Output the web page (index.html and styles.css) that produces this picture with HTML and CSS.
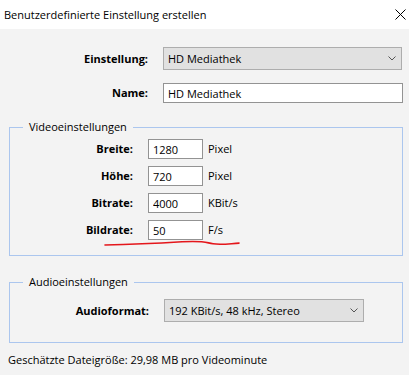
FILE: index.html
```html
<!DOCTYPE html>
<html lang="de">
<head>
  <meta charset="UTF-8">
  <title>Benutzerdefinierte Einstellung erstellen</title>
  <link rel="stylesheet" href="styles.css">
</head>
<body>
  <div class="titlebar">
    <span class="title">Benutzerdefinierte Einstellung erstellen</span>
    <svg class="close" width="11" height="11" viewBox="0 0 11 11">
      <path d="M0.5 0.5 L10.5 10.5 M10.5 0.5 L0.5 10.5" stroke="#000" stroke-width="1" fill="none"/>
    </svg>
  </div>

  <div class="dialog">
    <div class="rows top">
      <label class="lbl">Einstellung:</label>
      <div class="combo wide">
        <span>HD Mediathek</span>
        <svg class="chev" width="8" height="5" viewBox="0 0 8 5"><path d="M0.5 0.5 L4 4 L7.5 0.5" stroke="#555" fill="none"/></svg>
      </div>
      <label class="lbl">Name:</label>
      <input class="field wide" type="text" value="HD Mediathek">
    </div>

    <div class="group video">
      <div class="group-title">Videoeinstellungen</div>
      <div class="rows units">
        <label class="lbl">Breite:</label>
        <input class="field small" type="text" value="1280">
        <span class="unit">Pixel</span>

        <label class="lbl">Höhe:</label>
        <input class="field small" type="text" value="720">
        <span class="unit">Pixel</span>

        <label class="lbl">Bitrate:</label>
        <input class="field small" type="text" value="4000">
        <span class="unit">KBit/s</span>

        <label class="lbl">Bildrate:</label>
        <input class="field small" type="text" value="50">
        <span class="unit">F/s</span>
      </div>
    </div>

    <div class="group audio">
      <div class="group-title">Audioeinstellungen</div>
      <div class="rows">
        <label class="lbl">Audioformat:</label>
        <div class="combo medium">
          <span>192 KBit/s, 48 kHz, Stereo</span>
          <svg class="chev" width="8" height="5" viewBox="0 0 8 5"><path d="M0.5 0.5 L4 4 L7.5 0.5" stroke="#555" fill="none"/></svg>
        </div>
      </div>
    </div>

    <p class="size">Geschätzte Dateigröße: 29,98 MB pro Videominute</p>
  </div>

  <!-- rote Markierung unter "Bildrate" -->
  <svg class="scribble" width="140" height="10" viewBox="103 238 140 10">
    <path d="M105 245 C130 244.6, 160 243.2, 182 241.8 S205 242.4, 213 243.8 S230 243.6, 239 243.1"
          stroke="#e4161b" stroke-width="1.6" fill="none" stroke-linecap="round"/>
  </svg>
</body>
</html>
```

FILE: styles.css
```css
body{
  margin: 0;
  background-color: #f3f3f3;
  color: #000;
  font-family: "Open Sans", "Noto Sans", sans-serif;
  font-size: 11px;
  line-height: 16px;
  position: relative;
}
.titlebar{
  height: 29px;
  background-color: #fff;
  display: flex;
  align-items: center;
  justify-content: space-between;
  padding: 0 3px 0 4px;
}
.close{
  margin-top: -1px;
}
.dialog{
  padding: 18px 6px 0 9px;
}
.rows{
  display: grid;
  grid-template-columns: 139px 1fr;
  column-gap: 15px;
  align-items: center;
}
.rows.top{
  row-gap: 13px;
}
.rows.units{
  grid-template-columns: 138px 55px 1fr;
  column-gap: 0;
  row-gap: 7px;
}
.lbl{
  font-weight: bold;
  text-align: right;
}
.units .lbl{
  margin-right: 15px;
}
.unit{
  padding-left: 5px;
}
.combo{
  height: 23px;
  box-sizing: border-box;
  background-color: #e1e1e1;
  border: 1px solid #adadad;
  display: flex;
  align-items: center;
  justify-content: space-between;
  padding: 0 5px 0 4px;
}
.combo.wide{
  margin-right: 1px;
}
.combo.medium{
  width: 200px;
}
.field{
  height: 20px;
  box-sizing: border-box;
  margin: 0;
  border: 1px solid #939393;
  background-color: #fff;
  padding: 0 4px;
  font: inherit;
  color: #000;
}
.field.small{
  width: 55px;
}
/* Gruppenrahmen, Titel sitzt auf der oberen Linie */
.group{
  border: 1px solid #abc6ee;
  margin-top: 24px;
  padding-bottom: 15px;
}
.group-title{
  width: fit-content;
  margin: -9px 0 4px 13px;
  padding: 0 6px;
  background-color: #f3f3f3;
}
.group.audio{
  margin-top: 26px;
  padding-bottom: 20px;
}
.audio .group-title{
  margin-bottom: 9px;
}
.size{
  margin: 9px 0 0 -1px;
}
.scribble{
  position: absolute;
  left: 103px;
  top: 238px;
}
```
